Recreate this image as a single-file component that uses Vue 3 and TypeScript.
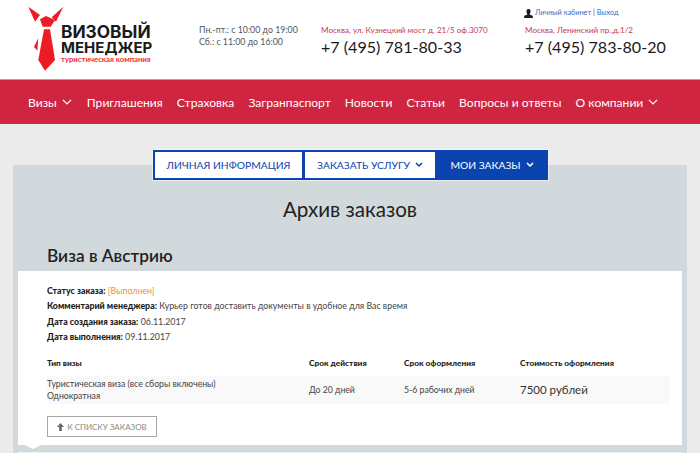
<script setup lang="ts">
const nav = [
  { label: 'Визы', caret: true },
  { label: 'Приглашения' },
  { label: 'Страховка' },
  { label: 'Загранпаспорт' },
  { label: 'Новости' },
  { label: 'Статьи' },
  { label: 'Вопросы и ответы' },
  { label: 'О компании', caret: true },
]
</script>

<template>
  <div class="page">
    <header class="top">
      <div class="logo">
        <svg class="tie" width="36" height="79" viewBox="28 0 36 79">
          <g fill="#ed1c24">
            <path d="M28.3 6.7 L40 15 L35 21.7 Z" />
            <path d="M63.3 6.7 L51.7 17.3 L56 21.7 Z" />
            <path d="M40 19.3 L46 16 L55 20 L50.7 26.7 L42.7 26.7 Z" />
            <path d="M44 29.3 L50 29.3 L55 60 L45 70.7 L38.3 60 Z" />
            <path d="M38.3 38.3 L34 46.7 L37.3 50.7 Z" />
          </g>
        </svg>
        <div class="brand">
          <div class="brand-name">ВИЗОВЫЙ</div>
          <div class="brand-name second">МЕНЕДЖЕР</div>
          <div class="brand-sub">туристическая компания</div>
        </div>
      </div>
      <div class="hours">
        <div>Пн.-пт.: с 10:00 до 19:00</div>
        <div>Сб.: с 11:00 до 16:00</div>
      </div>
      <div class="contact">
        <div class="addr">Москва, ул. Кузнецкий мост д. 21/5 оф.3070</div>
        <div class="phone">+7 (495) 781-80-33</div>
      </div>
      <div class="contact">
        <div class="account">
          <svg width="9" height="9" viewBox="0 0 10 10"><path d="M5 0 C6.8 0 7.4 1.4 7.2 3 C7.1 4.4 6.4 5.4 6.2 6 L9.6 7.6 L10 10 L0 10 L0.4 7.6 L3.8 6 C3.6 5.4 2.9 4.4 2.8 3 C2.6 1.4 3.2 0 5 0 Z" fill="#1c1c1c"/></svg>
          <span class="lnk">Личный кабинет</span><span class="sep"> | </span><span class="lnk">Выход</span>
        </div>
        <div class="addr">Москва, Ленинский пр.,д.1/2</div>
        <div class="phone">+7 (495) 783-80-20</div>
      </div>
    </header>

    <nav class="nav">
      <span v-for="n in nav" :key="n.label" class="nav-item">
        {{ n.label }}
        <svg v-if="n.caret" width="10" height="6" viewBox="0 0 10 6"><path d="M1 1 L5 5 L9 1" fill="none" stroke="#fff" stroke-width="1.1"/></svg>
      </span>
    </nav>

    <main class="main">
      <div class="tabs">
        <div class="tab">Личная информация</div>
        <div class="tab">Заказать услугу
          <svg width="8" height="6" viewBox="0 0 8 6"><path d="M1 1 L4 4 L7 1" fill="none" stroke="#0b44ae" stroke-width="1.5"/></svg>
        </div>
        <div class="tab active">Мои заказы
          <svg width="8" height="6" viewBox="0 0 8 6"><path d="M1 1 L4 4 L7 1" fill="none" stroke="#fff" stroke-width="1.5"/></svg>
        </div>
      </div>
      <section class="panel">
        <h1>Архив заказов</h1>
        <h2>Виза в Австрию</h2>
        <div class="card">
          <p><b>Статус заказа:</b> <span class="status">[Выполнен]</span></p>
          <p><b>Комментарий менеджера:</b> Курьер готов доставить документы в удобное для Вас время</p>
          <p><b>Дата создания заказа:</b> 06.11.2017</p>
          <p><b>Дата выполнения:</b> 09.11.2017</p>
          <div class="grid head">
            <b>Тип визы</b><b>Срок действия</b><b>Срок оформления</b><b>Стоимость оформления</b>
          </div>
          <div class="grid row">
            <div>Туристическая виза (все сборы включены)<br />Однократная</div>
            <div>До 20 дней</div>
            <div>5-6 рабочих дней</div>
            <div class="price">7500 рублей</div>
          </div>
          <div class="back">
            <svg width="7" height="8" viewBox="0 0 8 9"><path d="M4 0 L8 4.5 L5.5 4.5 L5.5 9 L2.5 9 L2.5 4.5 L0 4.5 Z" fill="#666"/></svg>
            К списку заказов
          </div>
          <i class="notch"></i>
        </div>
        <div class="next-card"></div>
      </section>
    </main>
  </div>
</template>

<style>
html, body { margin: 0; background: #ebebeb; }
</style>

<style scoped>
.page {
  width: 700px;
  height: 453px;
  overflow: hidden;
  font-family: Lato, "Open Sans", "Noto Sans", sans-serif;
  color: #333;
  background: #ebebeb;
}
.top {
  height: 79px;
  background: #fff;
  display: grid;
  box-sizing: border-box;
  padding-left: 28px;
  grid-template-columns: 171px 122px 204px 1fr;
}
.logo { display: flex; }
.tie { flex: none; margin-right: -3px; }
.brand { padding-top: 24px; width: 100px; }
.brand-name {
  font-family: Inter, sans-serif;
  font-weight: 700;
  font-size: 17.3px;
  line-height: 15px;
  color: #1a1a1a;
  white-space: nowrap;
}
.brand-name.second { font-size: 15px; line-height: 14px; margin-top: 2px; }
.brand-sub { font-size: 7.7px; font-weight: 700; color: #ed2c3b; line-height: 8px; white-space: nowrap; }
.hours { font-size: 8.8px; padding-top: 23.5px; color: #4d5860; }
.hours div { line-height: 12.3px; white-space: nowrap; }
.contact { padding-top: 24px; position: relative; }
.addr { font-size: 8.1px; line-height: 12px; color: #c73a4e; white-space: nowrap; }
.phone { font-size: 16.1px; line-height: 22px; color: #1a1a1a; white-space: nowrap; }
.account { position: absolute; top: 8px; left: -1px; font-size: 7.3px; line-height: 10px; display: flex; align-items: center; white-space: pre; }
.account svg { margin-right: 2px; }
.lnk { color: #3a6fc4; }
.sep { color: #555; }

.nav {
  height: 45px;
  box-sizing: border-box;
  background: #cf2541;
  border-top: 1px solid #e88a9a;
  display: flex;
  align-items: center;
  padding: 0 0 0 28px;
  gap: 14px;
  color: #fff;
  font-size: 12.1px;
}
.nav-item { white-space: nowrap; display: flex; align-items: center; gap: 5px; }
.nav-item:first-child { margin-right: 1px; }

.main { position: relative; padding-top: 41px; }
.tabs {
  position: absolute;
  top: 26px;
  left: 153px;
  display: flex;
  height: 30px;
  z-index: 1;
  box-shadow: 0 0 0 1px rgba(255, 255, 255, 0.5);
}
.tab {
  box-sizing: border-box;
  border: 2px solid #0b44ae;
  background: #fff;
  color: #0b44ae;
  font-size: 10.3px;
  text-transform: uppercase;
  display: flex;
  align-items: center;
  gap: 5px;
  justify-content: center;
  white-space: nowrap;
}
.tab:nth-child(1) { width: 151px; }
.tab:nth-child(2) { width: 134px; margin-left: -1px; }
.tab:nth-child(3) { width: 112px; margin-left: -1px; }
.tab.active { background: #0b44ae; color: #fff; }

.panel {
  margin: 0 13px;
  height: 300px;
  background: #d2d9dc;
  padding: 30px 5px 0;
  box-sizing: border-box;
}
h1 {
  margin: 0;
  text-align: center;
  font-size: 20.6px;
  line-height: 28px;
  font-weight: 400;
  color: #222;
}
h2 {
  margin: 21px 0 0 29px;
  font-size: 17.3px;
  line-height: 24px;
  font-weight: 600;
  color: #222;
}
.card {
  position: relative;
  margin-top: 3px;
  background: #fff;
  height: 174px;
  box-sizing: border-box;
  padding: 12px 12px 0 29px;
  color: #444;
}
.card p { margin: 0; line-height: 15.4px; font-size: 8.8px; }
.card b { color: #1c1c1c; font-weight: 900; }
.status { color: #f58f2a; }
.grid {
  display: grid;
  grid-template-columns: 262px 95px 116px 1fr;
  align-items: center;
}
.head { margin-top: 10.4px; height: 16px; font-size: 8.3px; }
.row { background: #f9f9f9; height: 28px; margin-top: 5px; line-height: 12.4px; font-size: 8.7px; }
.price { font-size: 11.5px; color: #333; }
.back {
  margin-top: 12px;
  width: 110px;
  height: 21px;
  box-sizing: border-box;
  border: 1px solid #a6a6a6;
  color: #888;
  font-size: 8px;
  text-transform: uppercase;
  display: flex;
  align-items: center;
  justify-content: center;
  gap: 3px;
}
.notch {
  position: absolute;
  left: 7px;
  top: 100%;
  border-left: 8px solid transparent;
  border-right: 8px solid transparent;
  border-top: 4px solid #fff;
}
.next-card { margin-top: 7px; height: 20px; background: #eef1f2; }
</style>
